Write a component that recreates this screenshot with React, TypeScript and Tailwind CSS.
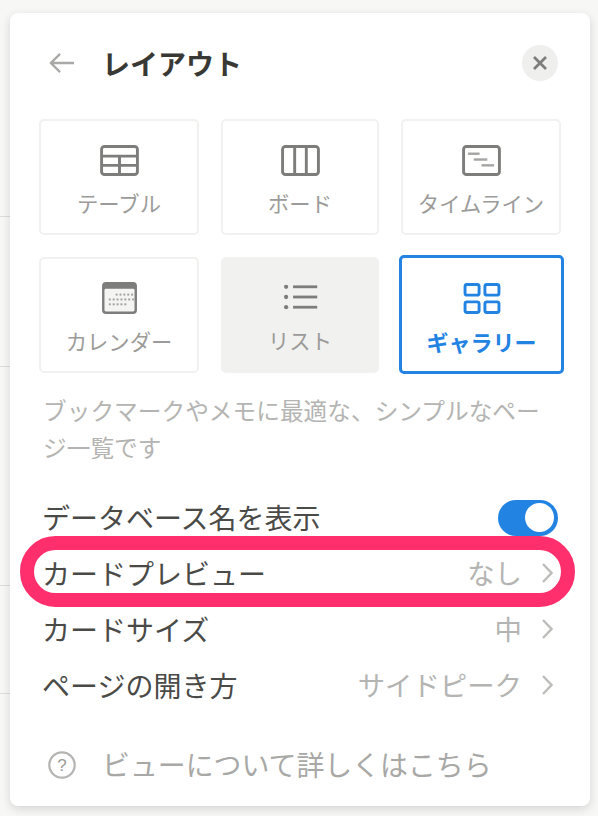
const FONT = "font-['Noto_Sans_CJK_JP','Noto_Sans',sans-serif]";

function BackIcon() {
  return (
    <svg width="27" height="24" viewBox="0 0 28 24" fill="none" stroke="#a9a9a7" strokeWidth="2.4">
      <path d="M27 12H3M12.5 2.5L3 12l9.500 9.500" />
    </svg>
  );
}

function TableIcon() {
  return (
    <svg width="39" height="31" viewBox="0 0 40 32" fill="none" stroke="#7d7d7b" strokeWidth="3">
      <rect x="1.500" y="1.500" width="37" height="29" rx="3" />
      <path d="M1.500 11.500h37M1.500 21h37M20 11.500V30.500" />
    </svg>
  );
}

function BoardIcon() {
  return (
    <svg width="39" height="31" viewBox="0 0 40 32" fill="none" stroke="#7d7d7b" strokeWidth="3">
      <rect x="1.500" y="1.500" width="37" height="29" rx="3" />
      <path d="M14 1.500v29M26 1.500v29" />
    </svg>
  );
}

function TimelineIcon() {
  return (
    <svg width="39" height="31" viewBox="0 0 40 32" fill="none" stroke="#7d7d7b" strokeWidth="3">
      <rect x="1.500" y="1.500" width="37" height="29" rx="3" />
      <path d="M6 9h12" stroke="#a5a5a3" strokeWidth="2.500" />
      <path d="M12 15h14" stroke="#a5a5a3" strokeWidth="2.500" />
      <path d="M20 21h13" stroke="#a5a5a3" strokeWidth="2.500" />
    </svg>
  );
}

function CalendarIcon() {
  const dots: number[][] = [
    [14, 12], [18, 12], [22, 12], [26, 12], [30, 12],
    [7, 17], [11, 17], [15, 17], [19, 17], [23, 17], [27, 17], [31, 17],
    [7, 22], [11, 22], [15, 22], [19, 22], [23, 22],
  ];
  return (
    <svg width="35" height="32" viewBox="0 0 36 33">
      <rect x="0" y="0" width="36" height="33" rx="4" fill="#7d7d7b" />
      <rect x="2.500" y="7" width="31" height="23.500" rx="1.500" fill="#f4f4f3" />
      {dots.map(([x, y], i) => (
        <rect key={i} x={x} y={y} width="2" height="2" fill="#a0a09e" />
      ))}
    </svg>
  );
}

function ListIcon() {
  return (
    <svg width="35" height="26" viewBox="0 0 36 28" fill="#7d7d7b">
      <circle cx="2.500" cy="3" r="2.300" />
      <circle cx="2.500" cy="14" r="2.300" />
      <circle cx="2.500" cy="25" r="2.300" />
      <rect x="10" y="1.500" width="26" height="3" />
      <rect x="10" y="12.500" width="26" height="3" />
      <rect x="10" y="23.500" width="26" height="3" />
    </svg>
  );
}

function GalleryIcon() {
  return (
    <svg width="38" height="31" viewBox="0 0 38 32" fill="none" stroke="#2383e2" strokeWidth="3">
      <rect x="1.500" y="1.500" width="14.500" height="11" rx="2" />
      <rect x="22" y="1.500" width="14.500" height="11" rx="2" />
      <rect x="1.500" y="19.500" width="14.500" height="11" rx="2" />
      <rect x="22" y="19.500" width="14.500" height="11" rx="2" />
    </svg>
  );
}

function Chevron() {
  return (
    <svg width="12" height="22" viewBox="0 0 12 22" fill="none" stroke="#bdbdbb" strokeWidth="2.400">
      <path d="M2 2l8.500 9L2 20" />
    </svg>
  );
}

function LayoutCard({
  label,
  icon,
  cardClass,
  labelClass,
}: {
  label: string;
  icon: React.ReactNode;
  cardClass: string;
  labelClass: string;
}) {
  return (
    <div className={`flex flex-col items-center rounded-[5px] ${cardClass}`}>
      <div className="h-[36px] flex items-center justify-center">{icon}</div>
      <div className={`mt-[9px] leading-[32px] whitespace-nowrap ${labelClass}`}>{label}</div>
    </div>
  );
}

function SettingRow({ label, value }: { label: string; value: string }) {
  return (
    <div className="h-[56px] flex items-center justify-between pr-[8px]">
      <span className="text-[28px] text-[#4a4a47]">{label}</span>
      <div className="flex items-center gap-[19px]">
        <span className="text-[27.400px] text-[#b4b4b2]">{value}</span>
        <Chevron />
      </div>
    </div>
  );
}

export default function App() {
  const plain = "border-2 border-[#f1f1f0] bg-white h-[116px] pt-[21px]";
  const muted = "text-[21.300px] text-[#9b9b99]";
  return (
    <div className={`relative w-[598px] h-[816px] overflow-hidden bg-[#f7f7f6] pt-[13px] pl-[10px] ${FONT}`}>
      {/* page lines behind the panel */}
      <div className="absolute left-0 top-[216px] w-[10px] h-px bg-[#dcdcdb]" />
      <div className="absolute left-0 top-[366px] w-[10px] h-px bg-[#dcdcdb]" />
      <div className="absolute left-0 top-[585px] w-[10px] h-px bg-[#dcdcdb]" />
      <div className="absolute left-0 top-[693px] w-[10px] h-px bg-[#dcdcdb]" />

      <div className="relative w-[580px] h-[793px] rounded-[8px] bg-white shadow-[0_3px_10px_rgba(0,0,0,0.14)] px-[29px]">
        {/* Header */}
        <div className="h-[106px] pb-[7px] flex items-center">
          <div className="ml-[9px] mr-[27px] flex items-center">
            <BackIcon />
          </div>
          <h1 className="text-[28px] font-bold text-[#383835]">レイアウト</h1>
          <div className="ml-auto mr-[3px] w-[36px] h-[36px] rounded-full bg-[#efefee] flex items-center justify-center">
            <svg width="16" height="16" viewBox="0 0 16 16" fill="none" stroke="#7d7d7b" strokeWidth="2.800">
              <path d="M2 2l12 12M14 2L2 14" />
            </svg>
          </div>
        </div>

        {/* Layout options */}
        <div className="grid grid-cols-[160px_158px_160px] gap-x-[22px] gap-y-[22px]">
          <LayoutCard label="テーブル" icon={<TableIcon />} cardClass={plain} labelClass={muted} />
          <LayoutCard label="ボード" icon={<BoardIcon />} cardClass={plain} labelClass={muted} />
          <LayoutCard label="タイムライン" icon={<TimelineIcon />} cardClass={plain} labelClass={muted} />
          <LayoutCard label="カレンダー" icon={<CalendarIcon />} cardClass={plain} labelClass={muted} />
          <LayoutCard label="リスト" icon={<ListIcon />} cardClass="bg-[#f1f1f0] h-[116px] pt-[22px]" labelClass={muted} />
          <LayoutCard
            label="ギャラリー"
            icon={<GalleryIcon />}
            cardClass="border-[3px] border-[#2383e2] bg-white h-[119px] w-[165px] -ml-[2px] -mt-[2px] pt-[22px]"
            labelClass="text-[22px] text-[#2383e2] font-bold"
          />
        </div>

        <p className="mt-[18px] pl-[4px] text-[23.7px] leading-[36.500px] text-[#b4b4b2]">
          ブックマークやメモに最適な、シンプルなペー
          <br />
          ジ一覧です
        </p>

        {/* Settings */}
        <div className="mt-[24px] pl-[3px]">
          <div className="h-[56px] flex items-center justify-between pr-[3px]">
            <span className="text-[28px] text-[#4a4a47]">データベース名を表示</span>
            <div className="mt-[1px] w-[60px] h-[36px] rounded-full bg-[#2383e2] flex items-center justify-end pr-[4px]">
              <div className="w-[29px] h-[29px] rounded-full bg-white" />
            </div>
          </div>
          <SettingRow label="カードプレビュー" value="なし" />
          <SettingRow label="カードサイズ" value="中" />
          <SettingRow label="ページの開き方" value="サイドピーク" />
        </div>

        {/* Footer */}
        <div className="mt-[34px] h-[36px] ml-[9px] flex items-center gap-[26px]">
          <svg width="28" height="28" viewBox="0 0 28 28" fill="none">
            <circle cx="14" cy="14" r="12.700" stroke="#b4b4b2" strokeWidth="2.200" />
            <text x="14" y="20" textAnchor="middle" fontSize="17" fill="#9b9b99" fontFamily="Liberation Sans">?</text>
          </svg>
          <span className="text-[27.900px] text-[#a8a8a6]">ビューについて詳しくはこちら</span>
        </div>
      </div>

      {/* Pink highlight over the card preview row */}
      <div className="absolute left-[20px] top-[536px] w-[555px] h-[71px] rounded-full border-[14px] border-[#ff2f6d]" />
    </div>
  );
}
